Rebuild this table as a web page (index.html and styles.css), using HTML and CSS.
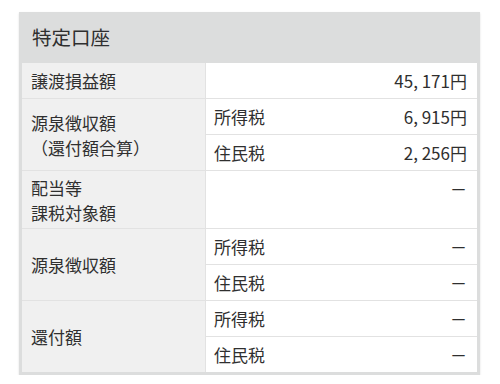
FILE: index.html
```html
<!DOCTYPE html>
<html lang="ja">
<head>
<meta charset="utf-8">
<link rel="stylesheet" href="styles.css">
</head>
<body>
<div class="card">
  <div class="card-title">特定口座</div>
  <table class="tax">
    <tr>
      <th class="head">譲渡損益額</th>
      <td class="val" colspan="2">45, 171円</td>
    </tr>
    <tr>
      <th class="head" rowspan="2">源泉徴収額<br>（還付額合算）</th>
      <td class="sub">所得税</td>
      <td class="val">6, 915円</td>
    </tr>
    <tr>
      <td class="sub">住民税</td>
      <td class="val">2, 256円</td>
    </tr>
    <tr>
      <th class="head top tight">配当等<br>課税対象額</th>
      <td class="val top" colspan="2">－</td>
    </tr>
    <tr>
      <th class="head" rowspan="2">源泉徴収額</th>
      <td class="sub">所得税</td>
      <td class="val">－</td>
    </tr>
    <tr>
      <td class="sub">住民税</td>
      <td class="val">－</td>
    </tr>
    <tr>
      <th class="head" rowspan="2">還付額</th>
      <td class="sub">所得税</td>
      <td class="val">－</td>
    </tr>
    <tr class="last">
      <td class="sub">住民税</td>
      <td class="val">－</td>
    </tr>
  </table>
</div>
</body>
</html>
```

FILE: styles.css
```css
html, body {
  margin: 0;
  padding: 0;
  background: #ffffff;
}

body {
  font-family: "Noto Sans CJK JP", "Noto Sans", sans-serif;
  color: #2f2f2f;
}

.card {
  margin: 12px 20px 0 19px;
  width: 455px;
  background: #dcdddd;
  padding: 0 3px 3px 3px;
  box-shadow: 0 1px 2px rgba(0, 0, 0, 0.12);
}

.card-title {
  height: 51px;
  line-height: 50px;
  padding-left: 10px;
  font-size: 19.5px;
}

.tax {
  width: 100%;
  border-collapse: collapse;
  font-size: 17px;
  line-height: 25px;
}

.tax th,
.tax td {
  padding: 5px 8px 5px 8px;
  border-bottom: 1px solid #e2e2e2;
  font-weight: normal;
  text-align: left;
  vertical-align: middle;
}

.tax tr.last td {
  border-bottom: none;
}

.head {
  width: 166px;
  background: #f0f0f0;
  padding-left: 9px !important;
  border-right: 1px solid #e2e2e2;
}

.tax th.tight {
  padding-top: 4px;
  padding-bottom: 3px;
}

.tax tr:nth-last-child(2) th {
  border-bottom: none;
}

.sub,
.val {
  background: #ffffff;
}

.sub {
  width: 80px;
}

.tax td.val {
  text-align: right;
  padding-right: 10px;
}

.tax .top {
  vertical-align: top;
}
```
